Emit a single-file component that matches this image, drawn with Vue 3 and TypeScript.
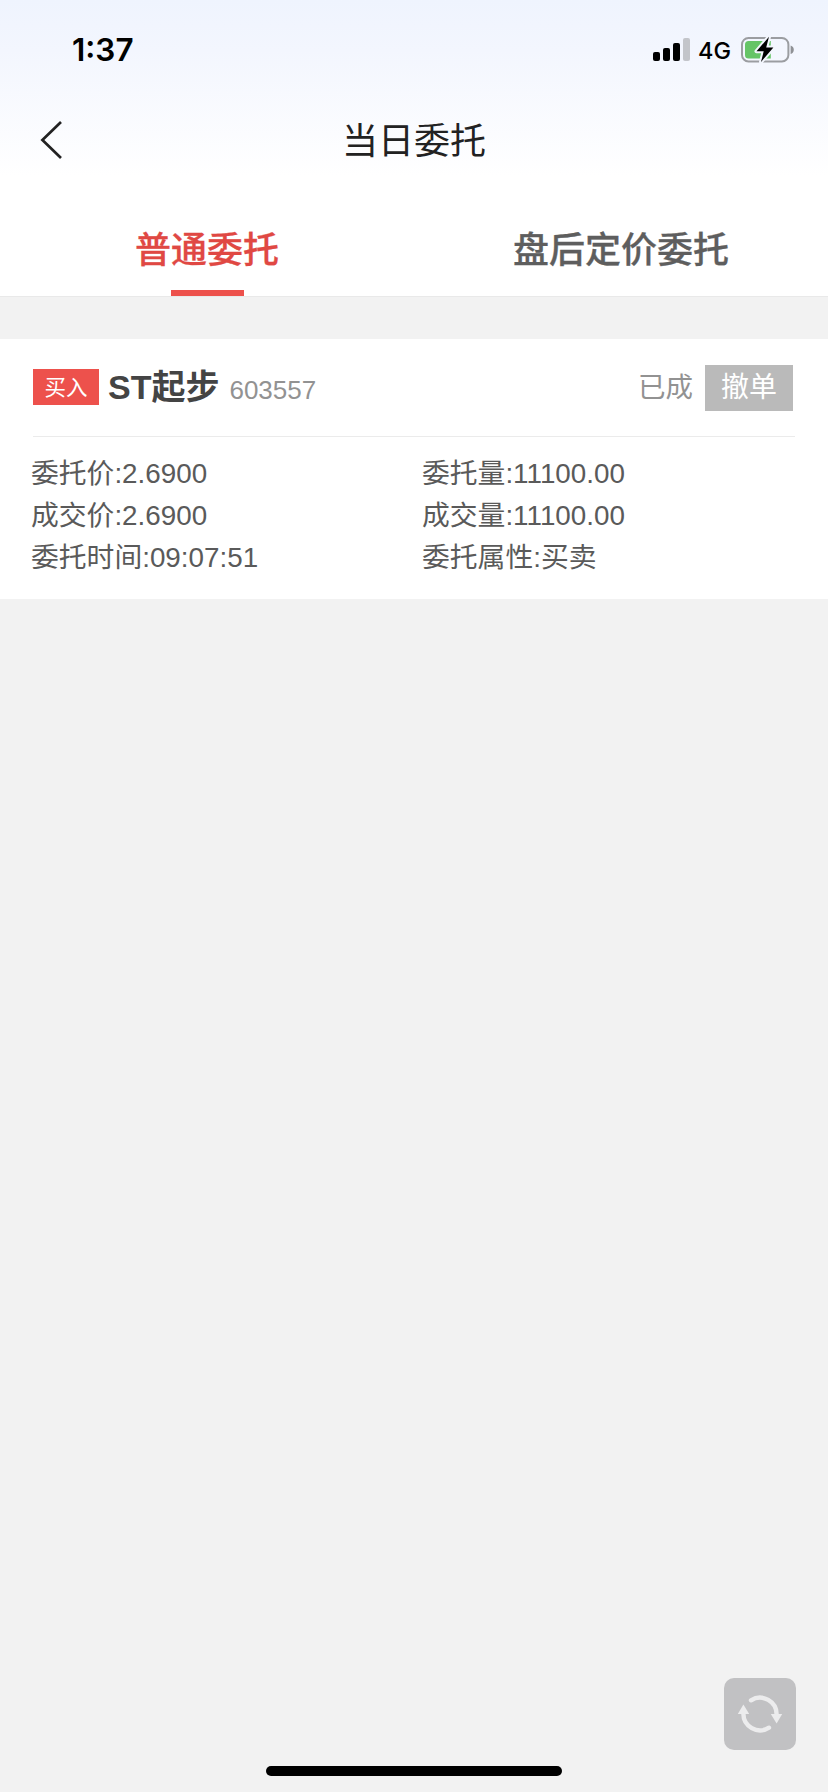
<script setup lang="ts">
import { ref } from 'vue'

interface Field {
  label: string
  value: string
}

interface Order {
  side: string
  name: string
  code: string
  status: string
  action: string
  fields: Field[]
}

const tabs: string[] = ['普通委托', '盘后定价委托']
const activeTab = ref(0)

const orders: Order[] = [
  {
    side: '买入',
    name: 'ST起步',
    code: '603557',
    status: '已成',
    action: '撤单',
    fields: [
      { label: '委托价', value: '2.6900' },
      { label: '委托量', value: '11100.00' },
      { label: '成交价', value: '2.6900' },
      { label: '成交量', value: '11100.00' },
      { label: '委托时间', value: '09:07:51' },
      { label: '委托属性', value: '买卖' },
    ],
  },
]
</script>

<template>
  <div class="screen">
    <header class="top">
      <div class="status-bar">
        <span class="time">1:37</span>
        <div class="indicators">
          <svg class="signal" width="37" height="23" viewBox="0 0 37 23">
            <rect x="0" y="14" width="7" height="9" rx="2" />
            <rect x="10" y="10" width="7" height="13" rx="2" />
            <rect x="20" y="5" width="7" height="18" rx="2" />
            <rect x="30" y="0" width="7" height="23" rx="2" fill="#c3c5ca" />
          </svg>
          <span class="network">4G</span>
          <svg class="battery" width="54" height="28" viewBox="0 0 54 28">
            <rect x="1" y="2" width="46.4" height="23.4" rx="6.5" fill="none" stroke="#9b9da1" stroke-width="2" />
            <path d="M49.600 9.500c2 .6 3.200 2.300 3.200 4.300s-1.200 3.700-3.200 4.300z" fill="#8f9195" />
            <path d="M7.500 5h22.300v17.400H7.500a3.500 3.500 0 0 1-3.500-3.500V8.500A3.500 3.500 0 0 1 7.500 5z" fill="#65c466" />
            <path d="M28 .8 15.500 15.300h7.200L20 26 32.400 11.500h-7.200z" fill="#000" stroke="#f3f6fd" stroke-width="4" stroke-linejoin="round" />
            <path d="M28 .8 15.500 15.300h7.200L20 26 32.400 11.500h-7.200z" fill="#000" />
          </svg>
        </div>
      </div>
      <nav class="nav-bar">
        <button class="back" type="button" aria-label="返回">
          <svg width="24" height="40" viewBox="0 0 24 40">
            <path d="M22 2 3.400 20 22 38" fill="none" stroke="#222" stroke-width="2.700" />
          </svg>
        </button>
        <h1 class="title">当日委托</h1>
      </nav>
    </header>

    <div class="tabs">
      <button
        v-for="(tab, i) in tabs"
        :key="tab"
        type="button"
        class="tab"
        :class="{ active: i === activeTab }"
        @click="activeTab = i"
      >
        {{ tab }}
      </button>
    </div>

    <main class="orders">
      <article v-for="order in orders" :key="order.code" class="order">
        <div class="order-head">
          <span class="side">{{ order.side }}</span>
          <span class="name">{{ order.name }}</span>
          <span class="code">{{ order.code }}</span>
          <span class="state">{{ order.status }}</span>
          <button class="cancel" type="button">{{ order.action }}</button>
        </div>
        <div class="fields">
          <span v-for="field in order.fields" :key="field.label">{{ field.label }}:{{ field.value }}</span>
        </div>
      </article>
    </main>

    <footer class="bottom">
      <button class="refresh" type="button" aria-label="刷新">
        <svg width="72" height="72" viewBox="0 0 72 72">
          <g fill="none" stroke="#ececed" stroke-width="4.400" stroke-linecap="round">
            <path d="M27 22.300A16.700 16.700 0 0 1 52.600 37" />
            <path d="M45 49.700A16.700 16.700 0 0 1 19.400 35" />
          </g>
          <path d="M46.800 36h11.400L52.600 45.500z" fill="#ececed" />
          <path d="M13.800 36h11.400L19.400 26.500z" fill="#ececed" />
        </svg>
      </button>
      <div class="home-indicator"></div>
    </footer>
  </div>
</template>

<style>
body {
  background: #f2f2f2;
}
</style>

<style scoped>
.screen {
  width: 828px;
  height: 1792px;
  display: flex;
  flex-direction: column;
  background: #f2f2f2;
  font-family: 'Liberation Sans', 'Noto Sans CJK SC', sans-serif;
}

button {
  border: 0;
  padding: 0;
  margin: 0;
  background: none;
  font-family: inherit;
}

svg {
  display: block;
}

.top {
  height: 192px;
  background: linear-gradient(#eff4fe 0, #f3f6fe 50px, #fff 176px);
}

.status-bar {
  height: 88px;
  box-sizing: border-box;
  padding: 12px 33px 0 72px;
  display: flex;
  justify-content: space-between;
  align-items: flex-start;
  font-family: Inter, sans-serif;
  color: #000;
}

.time {
  font-size: 31.5px;
  line-height: 76px;
  font-weight: 600;
}

.indicators {
  display: flex;
  align-items: flex-start;
}

.signal {
  margin-top: 26px;
}

.network {
  width: 33px;
  margin: 0 10px 0 8px;
  font-size: 23.5px;
  line-height: 77px;
  font-weight: 500;
}

.battery {
  margin-top: 24px;
}

.nav-bar {
  height: 104px;
  display: grid;
  grid-template-columns: 100px 1fr 100px;
}

.back {
  padding: 32px 0 0 39px;
  justify-self: start;
  align-self: start;
}

.title {
  margin: 0;
  text-align: center;
  font-size: 36px;
  line-height: 108px;
  height: 104px;
  font-weight: 400;
  color: #222;
}

.tabs {
  height: 105px;
  box-sizing: border-box;
  display: flex;
  background: #fff;
  border-bottom: 1px solid #e9e9e9;
}

.tab {
  flex: 1;
  display: flex;
  flex-direction: column;
  align-items: center;
  justify-content: space-between;
  font-size: 36px;
  line-height: 118px;
  font-weight: 500;
  -webkit-text-stroke: 0.3px;
  color: #5e5e5e;
}

.tab::after {
  content: '';
  width: 73px;
  height: 6px;
  margin-top: -20px;
}

.tab.active {
  color: #e04843;
}

.tab.active::after {
  background: #ed514c;
}

.orders {
  padding-top: 42px;
  flex: 1;
}

.order {
  height: 260px;
  background: #fff;
}

.order-head {
  height: 98px;
  box-sizing: border-box;
  margin: 0 33px;
  padding-right: 2px;
  display: flex;
  align-items: flex-start;
  border-bottom: 1px solid #ebebeb;
}

.side {
  width: 66px;
  height: 36px;
  margin-top: 30px;
  text-align: center;
  font-size: 21.5px;
  line-height: 38px;
  color: #fff;
  background: #ed514c;
}

.name {
  margin-left: 9px;
  font-size: 34px;
  line-height: 97px;
  height: 96px;
  font-weight: 700;
  color: #444;
}

.code {
  margin-left: 10px;
  font-size: 26px;
  line-height: 102px;
  height: 96px;
  color: #929292;
}

.state {
  margin-left: auto;
  font-size: 27.5px;
  line-height: 98px;
  height: 96px;
  color: #929292;
}

.cancel {
  width: 88px;
  height: 46px;
  margin: 26px 0 0 12px;
  font-size: 28px;
  line-height: 46px;
  color: #fff;
  background: #bababa;
}

.fields {
  padding: 16px 31px 0;
  display: grid;
  grid-template-columns: 391px 1fr;
  grid-auto-rows: 42px;
  font-size: 27.8px;
  line-height: 42px;
  color: #5a5a5a;
}

.bottom {
  display: flex;
  flex-direction: column;
  padding-bottom: 16px;
}

.refresh {
  width: 72px;
  height: 72px;
  margin: 0 32px 16px auto;
  border-radius: 10px;
  background: #c1c1c3;
}

.home-indicator {
  width: 296px;
  height: 10px;
  margin: 0 auto;
  border-radius: 5px;
  background: #000;
}
</style>
